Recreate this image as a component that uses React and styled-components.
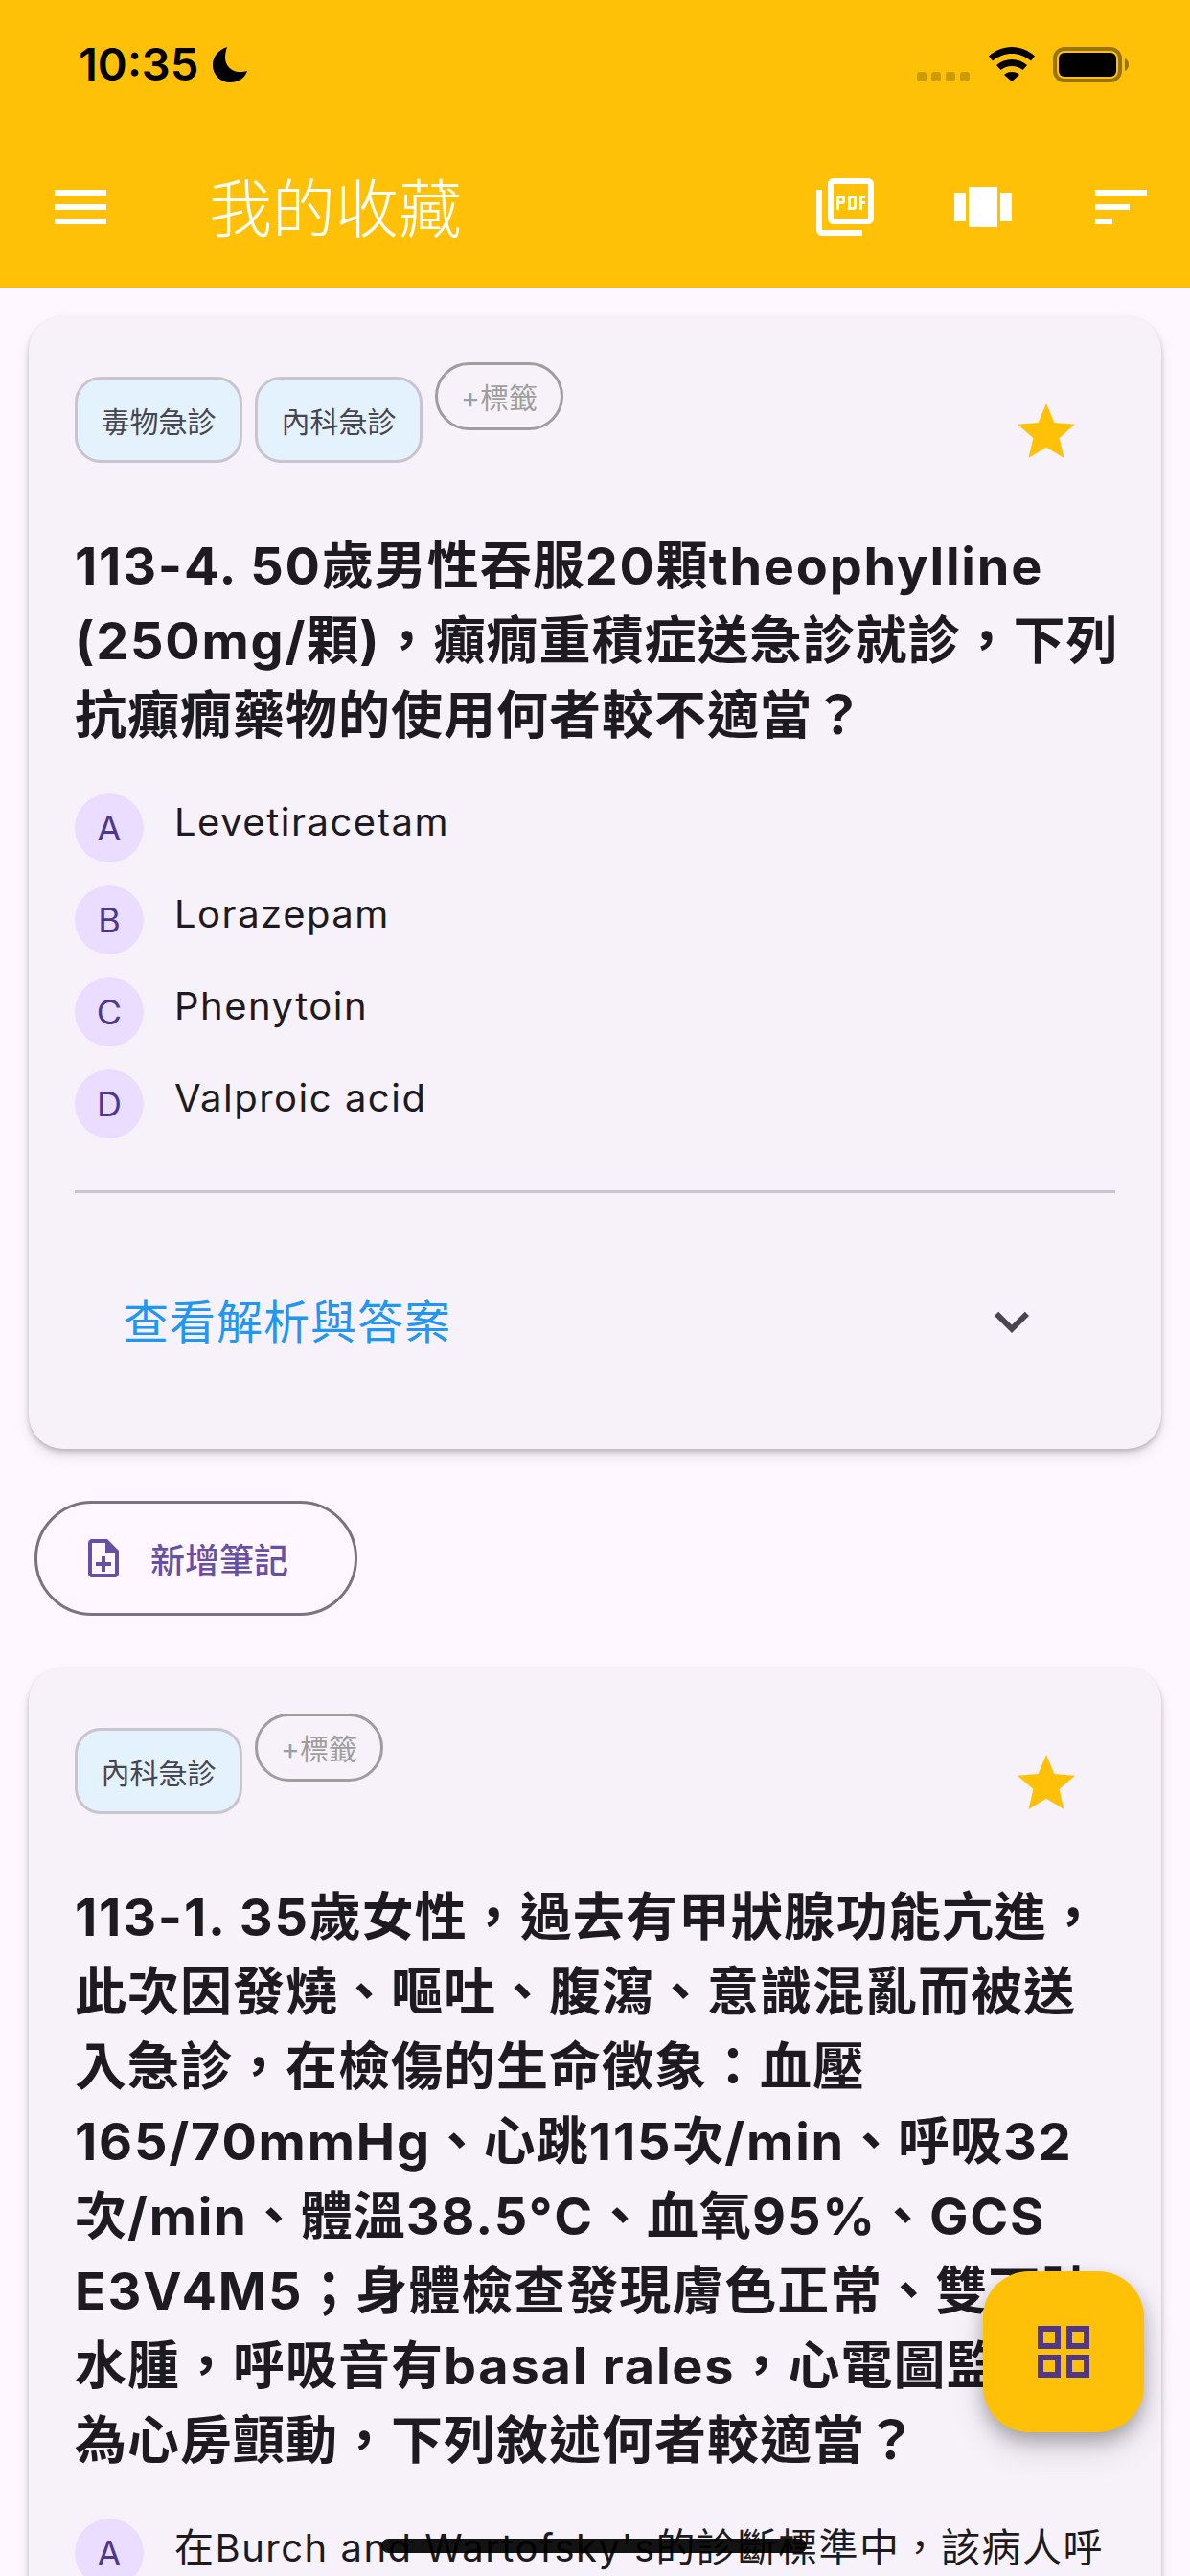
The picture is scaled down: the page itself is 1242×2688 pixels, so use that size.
import React from "react";
import styled, { createGlobalStyle } from "styled-components";

const Global = createGlobalStyle`
  html, body { margin: 0; padding: 0; background: #FEF7FF; }
  * { box-sizing: border-box; }
`;
const FONT = `Inter, "Noto Sans CJK TC", sans-serif`;

const Screen = styled.div`
  position: relative; width: 1242px; height: 2688px; overflow: hidden;
  background: #FEF7FF; font-family: ${FONT};
`;
const Header = styled.header`background: #FFC107; height: 300px; display: flex; flex-direction: column;`;
const StatusBar = styled.div`
  height: 132px; padding: 44px 64px 0 82px; display: flex; justify-content: space-between; align-items: flex-start; color: #000;
`;
const Clock = styled.div`display: flex; align-items: center; gap: 15px; font: 600 47px/46px Inter, sans-serif;`;
const StatusIcons = styled.div`display: flex; align-items: flex-start; padding-top: 5px;`;
const Dots = styled.div`display: flex; gap: 5px; margin-top: 26px; margin-right: 20px;`;
const Dot = styled.i`width: 10px; height: 10px; border-radius: 3px; background: rgba(0,0,0,.2);`;
const AppBar = styled.div`height: 168px; display: flex; align-items: center;`;
const Leading = styled.div`width: 168px; margin-right: 50px; height: 168px; display: flex; align-items: center; justify-content: center; color: #fff;`;
const Title = styled.h1`margin: 0; flex: 1; padding-top: 4px; font-weight: 300; font-size: 66px; line-height: 88px; color: #fff;`;
const Action = styled.div`width: 144px; height: 144px; display: flex; align-items: center; justify-content: center; color: #fff;`;
const Body = styled.main`padding: 30px 30px 0;`;
const Card = styled.section`
  background: #F7F2FA; border-radius: 36px; padding: 48px 48px ${(p) => p.$tail}px;
  box-shadow: 0 3px 5px rgba(0,0,0,.2), 0 7px 14px rgba(0,0,0,.1);
`;
const CardTop = styled.div`display: flex; align-items: flex-start; justify-content: space-between; height: 120px;`;
const Tags = styled.div`display: flex; align-items: flex-start; gap: 13px;`;
const Tag = styled.span`
  margin-top: 15px; height: 90px; width: 175px; border: 3px solid #CAC4D0; border-radius: 27px; background: #E3F2FD;
  display: flex; align-items: center; justify-content: center; font-size: 30px; color: #49454F;
`;
const AddTag = styled.span`
  height: 71px; width: 134px; border: 3px solid #9E9E9E; border-radius: 36px;
  display: flex; align-items: center; justify-content: center; font-size: 30px; color: #9E9E9E; padding-bottom: 2px;
`;
const Star = styled.div`margin: 37px 36px 0 0; height: 72px; color: #FFC107;`;
const Question = styled.h2`
  margin: 0; padding-top: 54px; font-size: 54px; line-height: 78px; font-weight: 700; color: #1D1B20; letter-spacing: 1.8px; white-space: nowrap;
`;
const QuestionHan = styled.span`letter-spacing: 1px;`;
const Options = styled.div`display: flex; flex-direction: column; gap: 24px; margin-top: 42px;`;
const Option = styled.div`display: flex; gap: 32px; align-items: flex-start;`;
const Badge = styled.span`
  flex: none; width: 72px; height: 72px; border-radius: 50%; background: #EADDFF; color: #4F378B;
  display: flex; align-items: center; justify-content: center; font-size: 36px;
`;
const OptionText = styled.span`font-size: 40px; line-height: 60px; letter-spacing: 1.5px; color: #1D1B20; white-space: nowrap;`;
const OptionHan = styled.span`font-size: 41px;`;
const Divider = styled.hr`margin: 54px 0 0; border: 0; height: 3px; background: #CAC4D0;`;
const Reveal = styled.div`height: 267px; display: flex; align-items: center; justify-content: space-between; padding: 0 72px 0 50px; color: #49454F;`;
const RevealText = styled.span`font-size: 48px; letter-spacing: 1px; color: #2196F3; padding-bottom: 5px;`;
const NoteButton = styled.div`
  margin: 54px 0 54px 6px; width: 337px; height: 120px; border: 3px solid #79747E; border-radius: 60px;
  display: flex; align-items: center; gap: 25px; padding-left: 45px; color: #6750A4; font-size: 36px; font-weight: 500;
`;
const Fab = styled.div`
  position: absolute; left: 1026px; top: 2370px; width: 168px; height: 168px; border-radius: 48px; background: #FFC107; color: #4F378B;
  display: flex; align-items: center; justify-content: center; box-shadow: 0 9px 18px rgba(0,0,0,.25), 0 18px 36px rgba(0,0,0,.12);
`;
const HomeBar = styled.div`position: absolute; left: 398px; top: 2649px; width: 444px; height: 15px; border-radius: 8px; background: #000; opacity: .92;`;

const Icon = ({ d, size = 72 }) => (
  <svg width={size} height={size} viewBox="0 0 24 24" fill="currentColor"><path d={d} /></svg>
);
const P = {
  menu: "M3 18h18v-2H3v2zm0-5h18v-2H3v2zm0-7v2h18V6H3z",
  pdf: "M20 2H8c-1.1 0-2 .9-2 2v12c0 1.1.9 2 2 2h12c1.1 0 2-.9 2-2V4c0-1.1-.9-2-2-2zm0 14H8V4h12v12zM4 6H2v14c0 1.1.9 2 2 2h14v-2H4V6zm12 6v-3c0-.55-.45-1-1-1h-2v5h2c.55 0 1-.45 1-1zm-2-3h1v3h-1V9zm4 2h1v-1h-1V9h1V8h-2v5h1zm-8 0h1c.55 0 1-.45 1-1V9c0-.55-.45-1-1-1H9v5h1v-2zm0-2h1v1h-1V9z",
  carousel: "M2 7h4v10H2zM7 5h10v14H7zM18 7h4v10h-4z",
  sort: "M3 18h6v-2H3v2zM3 6v2h18V6H3zm0 7h12v-2H3v2z",
  star: "M12 17.27L18.18 21l-1.64-7.03L22 9.24l-7.19-.61L12 2 9.19 8.63 2 9.24l5.46 4.73L5.82 21z",
  chevron: "M16.59 8.59L12 13.17 7.41 8.59 6 10l6 6 6-6z",
  note: "M14 2H6c-1.1 0-2 .9-2 2v16c0 1.1.89 2 1.99 2H18c1.1 0 2-.9 2-2V8l-6-6zm4 18H6V4h7v5h5v11zM13 11h-2v3H8v2h3v3h2v-3h3v-2h-3z",
  grid: "M3 3v8h8V3H3zm6 6H5V5h4v4zm-6 4v8h8v-8H3zm6 6H5v-4h4v4zM13 3v8h8V3h-8zm6 6h-4V5h4v4zm-6 4v8h8v-8h-8zm6 6h-4v-4h4v4z",
};

const Moon = () => (
  <svg width="36" height="37" viewBox="0 0 36 37" fill="#000">
    <path d="M15 0C6 3 0 10 0 19c0 10 8 18 18 18 9 0 16-5 18-12-3 1-6 1-8 1-9 0-15-7-15-15 0-4 1-8 2-11z" />
  </svg>
);
const Wifi = () => (
  <svg width="48" height="36" viewBox="0 0 48 36" fill="#000">
    <path d="M24 0c9 0 17 3.500 24 9.500l-4 5C38 9.500 31 7 24 7S10 9.500 4 14.500l-4-5C7 3.500 15 0 24 0z" />
    <path d="M24 13c6 0 11.500 2 16 6l-4.500 5c-3.500-2.500-7-4-11.500-4s-8 1.500-11.500 4L8 19c4.500-4 10-6 16-6z" />
    <path d="M24 26c3.500 0 6 1 8 3l-8 7-8-7c2-2 4.500-3 8-3z" />
  </svg>
);
const Battery = () => (
  <svg width="79" height="37" viewBox="0 0 79 37" style={{ marginLeft: 19 }}>
    <rect x="2" y="2" width="68" height="33" rx="10" fill="none" stroke="#000" strokeOpacity=".4" strokeWidth="4" />
    <rect x="6" y="6" width="60" height="25" rx="6" fill="#000" />
    <path d="M75 12c2.500 1 4 3.500 4 6.500s-1.500 5.500-4 6.500z" fill="#000" fillOpacity=".4" />
  </svg>
);

/* Latin and Han runs take different spacing: wrap each Han run in the given part. */
const Runs = ({ text, han: Han }) =>
  text.split(/([\u2E80-\uFFFF]+)/).map((part, i) => (i % 2 ? <Han key={i}>{part}</Han> : part));

const QuestionCard = ({ tags, lines, options, reveal }) => (
  <Card $tail={reveal ? 0 : 240}>
    <CardTop>
      <Tags>
        {tags.map((t) => <Tag key={t}>{t}</Tag>)}
        <AddTag>+標籤</AddTag>
      </Tags>
      <Star><Icon d={P.star} /></Star>
    </CardTop>
    <Question>
      {lines.map((l, i) => <React.Fragment key={i}><Runs text={l} han={QuestionHan} /><br /></React.Fragment>)}
    </Question>
    <Options>
      {options.map((o, i) => (
        <Option key={o}><Badge>{"ABCD"[i]}</Badge><OptionText><Runs text={o} han={OptionHan} /></OptionText></Option>
      ))}
    </Options>
    {reveal && (
      <>
        <Divider />
        <Reveal><RevealText>查看解析與答案</RevealText><Icon d={P.chevron} /></Reveal>
      </>
    )}
  </Card>
);

export default function App() {
  return (
    <Screen>
      <Global />
      <Header>
        <StatusBar>
          <Clock>10:35<Moon /></Clock>
          <StatusIcons>
            <Dots><Dot /><Dot /><Dot /><Dot /></Dots>
            <Wifi />
            <Battery />
          </StatusIcons>
        </StatusBar>
        <AppBar>
          <Leading><Icon d={P.menu} /></Leading>
          <Title>我的收藏</Title>
          <Action><Icon d={P.pdf} /></Action>
          <Action><Icon d={P.carousel} /></Action>
          <Action><Icon d={P.sort} /></Action>
        </AppBar>
      </Header>
      <Body>
        <QuestionCard
          reveal
          tags={["毒物急診", "內科急診"]}
          lines={["113-4. 50歲男性吞服20顆theophylline", "(250mg/顆)，癲癇重積症送急診就診，下列", "抗癲癇藥物的使用何者較不適當？"]}
          options={["Levetiracetam", "Lorazepam", "Phenytoin", "Valproic acid"]}
        />
        <NoteButton><Icon d={P.note} size={48} />新增筆記</NoteButton>
        <QuestionCard
          tags={["內科急診"]}
          lines={[
            "113-1. 35歲女性，過去有甲狀腺功能亢進，",
            "此次因發燒、嘔吐、腹瀉、意識混亂而被送",
            "入急診，在檢傷的生命徵象：血壓",
            "165/70mmHg、心跳115次/min、呼吸32",
            "次/min、體溫38.5°C、血氧95%、GCS",
            "E3V4M5；身體檢查發現膚色正常、雙下肢",
            "水腫，呼吸音有basal rales，心電圖監測",
            "為心房顫動，下列敘述何者較適當？",
          ]}
          options={["在Burch and Wartofsky's的診斷標準中，該病人呼"]}
        />
      </Body>
      <Fab><Icon d={P.grid} /></Fab>
      <HomeBar />
    </Screen>
  );
}
